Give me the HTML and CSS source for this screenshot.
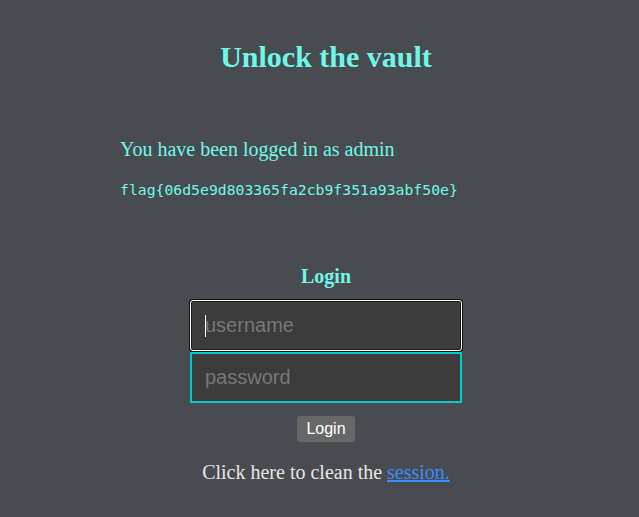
FILE: index.html
```html
<!DOCTYPE html>
<html lang="en">
<head>
<meta charset="utf-8">
<title>Unlock the vault</title>
<link rel="stylesheet" href="styles.css">
</head>
<body>
<div class="page">
  <h1 class="title">Unlock the vault</h1>
  <div class="status">
    <p class="logged">You have been logged in as admin</p>
    <p class="flag">flag{06d5e9d803365fa2cb9f351a93abf50e}</p>
  </div>
  <form class="login">
    <h3 class="login-title">Login</h3>
    <div class="fields">
      <div class="field-wrap">
        <input class="field field-focus" type="text" placeholder="username">
        <span class="caret"></span>
      </div>
      <input class="field field-pass" type="password" placeholder="password">
    </div>
    <button class="btn" type="button">Login</button>
  </form>
  <p class="clean">Click here to clean the <a class="link" href="#">session.</a></p>
</div>
</body>
</html>
```
FILE: styles.css
```css
html, body {
  margin: 0;
  padding: 0;
  background: #484c50;
}
body {
  font-family: "Liberation Serif", "Times New Roman", serif;
  min-height: 517px;
}
.page {
  padding-left: 13px;
  padding-top: 39px;
  display: flex;
  flex-direction: column;
  align-items: center;
}
.title {
  margin: 0;
  font-size: 30px;
  line-height: 36px;
  font-weight: bold;
  color: #6ff7e9;
}
.status {
  align-self: flex-start;
  padding-left: 107px;
  margin-top: 62px;
}
.logged {
  margin: 0;
  font-size: 20px;
  line-height: 24px;
  color: #6ff7e9;
}
.flag {
  margin: 20px 0 0;
  font-family: "DejaVu Sans Mono", monospace;
  font-size: 14.77px;
  line-height: 18px;
  color: #6ff7e9;
}
.login {
  margin-top: 65px;
  display: flex;
  flex-direction: column;
  align-items: center;
}
.login-title {
  margin: 0;
  font-size: 20px;
  line-height: 24px;
  font-weight: bold;
  color: #6ff7e9;
}
.fields {
  margin-top: 12px;
  display: flex;
  flex-direction: column;
  gap: 1px;
}
.field-wrap {
  position: relative;
  display: flex;
}
.caret {
  position: absolute;
  left: 15px;
  top: 15px;
  width: 1px;
  height: 22px;
  background: #ffffff;
}
.field {
  box-sizing: border-box;
  width: 272px;
  height: 51px;
  margin: 0;
  padding: 0 12px 0 13px;
  background: #3c3c3c;
  border: 2px solid #3c3c3c;
  font-family: "Liberation Sans", Arial, sans-serif;
  font-size: 20px;
  color: #dddddd;
  outline: none;
}
.field::placeholder {
  color: #777777;
}
.field-focus {
  border: 1px solid #ffffff;
  border-radius: 3px;
  padding-left: 14px;
  box-shadow: 0 0 0 1px #111111, inset 0 0 0 1px #1a1a1a;
}
.field-pass {
  border-color: #00cccc;
}
.btn {
  margin-top: 13px;
  padding: 4px 9px;
  height: 26px;
  box-sizing: border-box;
  background: #676767;
  color: #ffffff;
  border: none;
  border-radius: 3px;
  font-family: "Liberation Sans", Arial, sans-serif;
  font-size: 16px;
  line-height: 18px;
}
.clean {
  margin: 18px 0 0;
  font-size: 20px;
  line-height: 24px;
  color: #e6e6e6;
}
.link {
  color: #3a8cff;
  text-decoration: underline;
}
```
